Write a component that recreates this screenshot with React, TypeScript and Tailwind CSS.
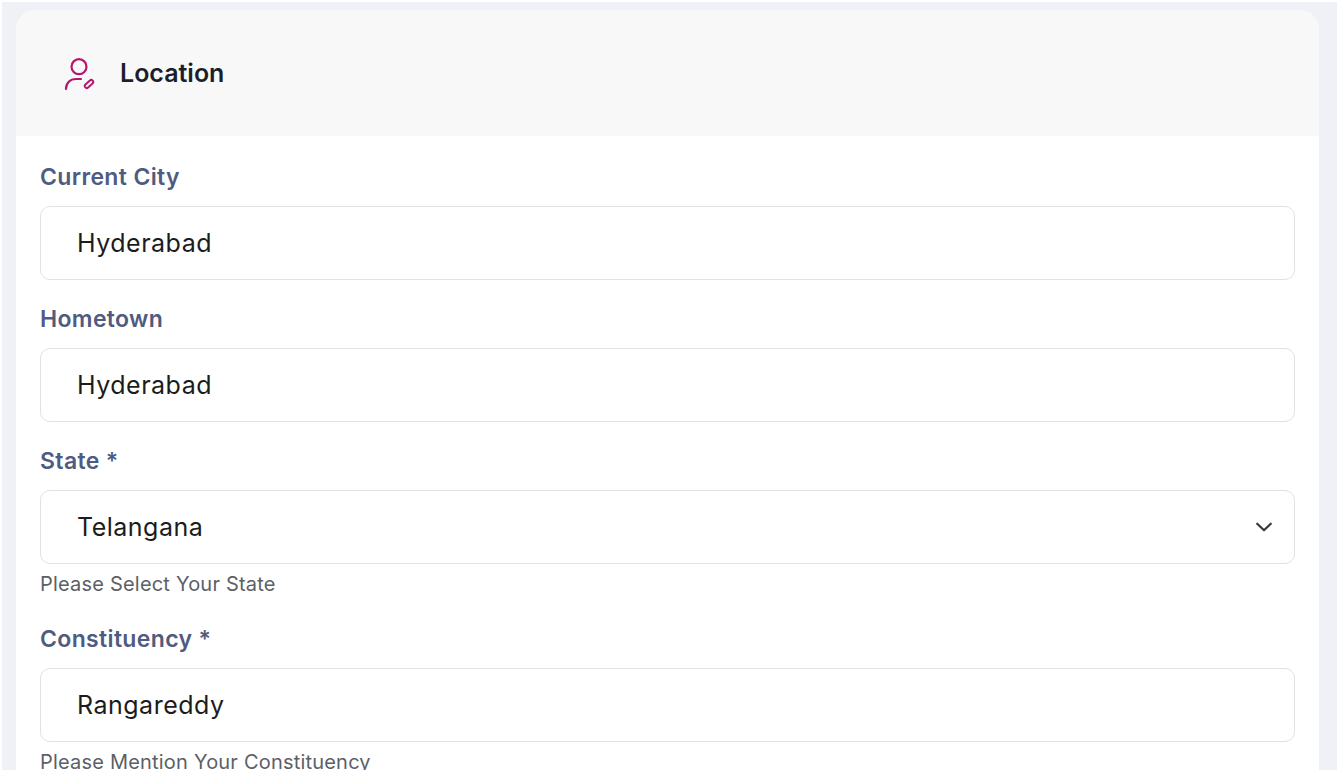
import React from "react";

const font = { fontFamily: '"Inter", "Noto Sans", sans-serif' };

function Field({ label, value, hint, select }: { label: string; value: string; hint?: string; select?: boolean }) {
  return (
    <div>
      <label className="block h-[28px] text-[23px] leading-[30px] font-semibold tracking-[0.35px] text-[#4f5b80]">{label}</label>
      <div className="mt-[16px] flex h-[74px] items-center justify-between rounded-[10px] border border-[#e0e2e6] bg-white pl-[36px] pr-[20px]">
        <span className="pt-[2px] text-[25px] tracking-[0.5px] text-[#1c1c1c]">{value}</span>
        {select && (
          <svg width="20" height="20" viewBox="0 0 20 20" fill="none" stroke="#343a40" strokeWidth="2.200" strokeLinecap="round" strokeLinejoin="round">
            <path d="M3.200 6.700L10 13.300L16.800 6.700" />
          </svg>
        )}
      </div>
      {hint && <p className="mb-[3px] mt-[7px] h-[26px] text-[20px] leading-[26px] tracking-[0.2px] text-[#5c5f66]">{hint}</p>}
    </div>
  );
}

export default function App() {
  return (
    <div className="h-[770px] overflow-hidden bg-white px-[2px] pt-[2px]" style={font}>
      <div className="h-[768px] overflow-hidden bg-[#f0f1f6] pl-[14px] pr-[18px] pt-[8px]">
        <div className="h-[760px] overflow-hidden rounded-t-[20px] bg-white">
          <div className="flex h-[126px] items-center gap-[24px] bg-[#f8f8f9] pl-[48px]">
            <svg width="32" height="36" viewBox="0 0 32 36" fill="none" stroke="#b5176f" strokeWidth="2.200" strokeLinecap="round" strokeLinejoin="round">
              <circle cx="15" cy="11.700" r="7.500" />
              <path d="M2 34c0-6 4-10 10-10h5" />
              <rect x="20" y="27" width="10" height="4" rx="2" strokeWidth="1.900" transform="rotate(-42 25 29)" />
            </svg>
            <h1 className="pt-[1px] text-[25px] font-semibold text-[#1a1f2b]">Location</h1>
          </div>
          <div className="flex flex-col gap-[24px] px-[24px] pt-[26px]">
            <Field label="Current City" value="Hyderabad" />
            <Field label="Hometown" value="Hyderabad" />
            <Field label="State *" value="Telangana" hint="Please Select Your State" select />
            <Field label="Constituency *" value="Rangareddy" hint="Please Mention Your Constituency" />
          </div>
        </div>
      </div>
    </div>
  );
}
